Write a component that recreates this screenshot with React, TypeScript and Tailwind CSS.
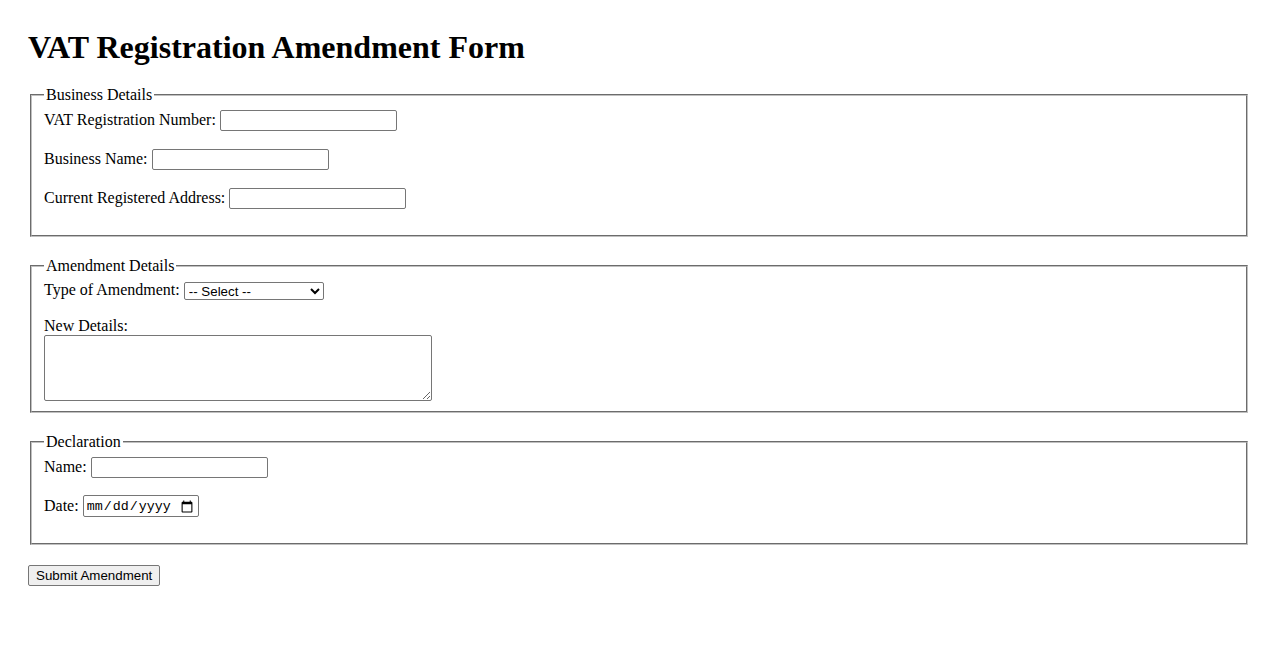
import React from 'react';

const inputCls =
  "h-[21px] w-[177px] rounded-[2px] border border-[#767676] bg-white px-[2px] py-[1px] font-['Liberation_Sans',Arial,sans-serif] text-[13.333px]";

const fieldsetCls =
  'mx-[2px] mb-5 border-2 border-[#c0c0c0] [border-style:groove] px-3 pt-[4px] pb-[10px]';

function Row({ label, children, h = 'h-[24px]' }: { label: string; children: React.ReactNode; h?: string }) {
  return (
    <div className={`mb-[15px] flex items-center gap-[4px] ${h}`}>
      <label>{label}</label>
      {children}
    </div>
  );
}

export default function App() {
  return (
    <div className="min-h-screen bg-white px-7 pt-2 font-['Liberation_Serif','Times_New_Roman',serif] text-base leading-[1.15] text-black">
      <h1 className="mt-[21.44px] mb-[19.5px] text-[32px] font-bold leading-[1.15]">VAT Registration Amendment Form</h1>
      <form onSubmit={(e) => e.preventDefault()}>
        <fieldset className={fieldsetCls}>
          <legend className="px-[2px]">Business Details</legend>
          <Row label="VAT Registration Number:">
            <input type="text" className={inputCls} />
          </Row>
          <Row label="Business Name:">
            <input type="text" className={inputCls} />
          </Row>
          <Row label="Current Registered Address:">
            <input type="text" className={inputCls} />
          </Row>
        </fieldset>

        <fieldset className={fieldsetCls}>
          <legend className="px-[2px]">Amendment Details</legend>
          <Row label="Type of Amendment:" h="h-[22px]">
            <select className="h-[18px] w-[140px] rounded-[2px] border border-[#767676] bg-white font-['Liberation_Sans',Arial,sans-serif] text-[13.333px]">
              <option>-- Select --</option>
              <option>Change of Address</option>
              <option>Change of Business Name</option>
              <option>Change of Bank Details</option>
            </select>
          </Row>
          <div>
            <label>New Details:</label>
            <textarea
              rows={4}
              className="block h-[66px] w-[388px] resize rounded-[2px] border border-[#767676] bg-white px-[2px] py-[2px] font-['Liberation_Mono',monospace] text-[13.333px]"
            />
          </div>
        </fieldset>

        <fieldset className={fieldsetCls}>
          <legend className="px-[2px]">Declaration</legend>
          <Row label="Name:">
            <input type="text" className={inputCls} />
          </Row>
          <Row label="Date:">
            <input
              type="date"
              className="h-[22px] w-[116px] rounded-[2px] border border-[#767676] bg-white px-[2px] py-[1px] font-['Liberation_Mono',monospace] text-[13.333px]"
            />
          </Row>
        </fieldset>

        <button
          type="submit"
          className="h-[21px] rounded-[2px] border border-[#767676] bg-[#efefef] px-[7px] py-[1px] font-['Liberation_Sans',Arial,sans-serif] text-[13.333px] leading-[1.15]"
        >
          Submit Amendment
        </button>
      </form>
    </div>
  );
}
